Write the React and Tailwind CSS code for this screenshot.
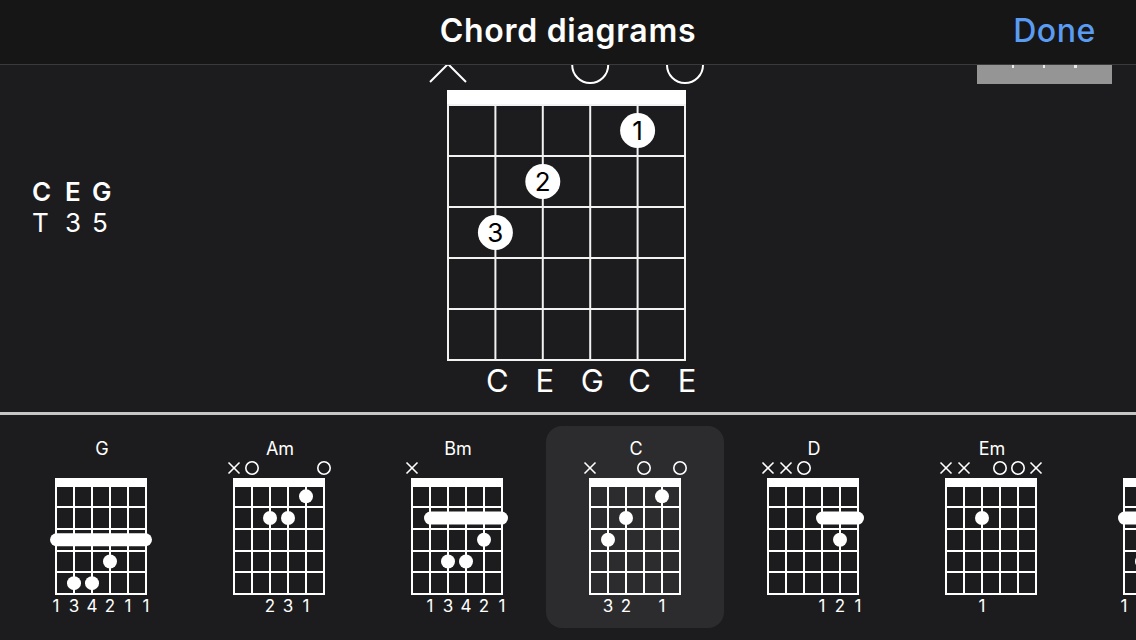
import React from "react";

const FONT = { fontFamily: "Inter, 'Liberation Sans', sans-serif" };

const S = [44, 62, 80, 98, 116, 134];
const fc = (f) => 25.5 + 21.7 * (f - 0.5);
const FRETS = [0, 1, 2, 3, 4, 5].map((j) => Math.round(25.5 + 21.7 * j));

const chords = [
  { name: "G", markers: [null, null, null, null, null, null], barres: [[3, 0, 5]], dots: [[3, 4], [1, 5], [2, 5]], fingers: ["1", "3", "4", "2", "1", "1"] },
  { name: "Am", markers: ["x", "o", null, null, null, "o"], barres: [], dots: [[4, 1], [2, 2], [3, 2]], fingers: ["", "", "2", "3", "1", ""] },
  { name: "Bm", markers: ["x", null, null, null, null, null], barres: [[2, 1, 5]], dots: [[4, 3], [2, 4], [3, 4]], fingers: ["", "1", "3", "4", "2", "1"] },
  { name: "C", markers: ["x", null, null, "o", null, "o"], barres: [], dots: [[4, 1], [2, 2], [1, 3]], fingers: ["", "3", "2", "", "1", ""], selected: true },
  { name: "D", markers: ["x", "x", "o", null, null, null], barres: [[2, 3, 5]], dots: [[4, 3]], fingers: ["", "", "", "1", "2", "1"] },
  { name: "Em", markers: ["x", "x", null, "o", "o", "x"], barres: [], dots: [[2, 2]], fingers: ["", "", "1", "", "", ""] },
  { name: "F#m", markers: [null, null, null, null, null, null], barres: [[2, 0, 5]], dots: [[1, 4], [2, 4]], fingers: ["1", "3", "4", "1", "1", "1"] },
];

function MiniChord({ c }) {
  return (
    <div
      className={`w-[178px] h-[202px] shrink-0 rounded-[16px] flex flex-col items-center ${c.selected ? "bg-[#2c2c2e]" : ""}`}
    >
      <div className="mt-[12px] h-[22px] leading-[22px] text-[18px] text-white pl-[2px]">{c.name}</div>
      <svg width="178" height="136" className="block">
        {c.markers.map((m, i) =>
          m === "x" ? (
            <g key={i} stroke="white" strokeWidth="1.6">
              <line x1={S[i] - 5.5} y1={2.5} x2={S[i] + 5.5} y2={13.5} />
              <line x1={S[i] + 5.5} y1={2.5} x2={S[i] - 5.5} y2={13.5} />
            </g>
          ) : m === "o" ? (
            <circle key={i} cx={S[i]} cy={8} r={6.2} fill="none" stroke="white" strokeWidth="1.6" />
          ) : null
        )}
        <rect x={43} y={18} width={92} height={8} fill="white" />
        {S.map((x, i) => (
          <line key={"v" + i} x1={x} y1={25} x2={x} y2={FRETS[5] + 1} stroke="white" strokeWidth="2" />
        ))}
        {FRETS.map((y, j) => (
          <line key={"h" + j} x1={43} y1={y} x2={135} y2={y} stroke="white" strokeWidth="2" />
        ))}
        {c.barres.map(([f, a, b], i) => (
          <rect key={"b" + i} x={S[a] - 6} y={fc(f) - 6.5} width={S[b] - S[a] + 12} height={13} rx={6.5} fill="white" />
        ))}
        {c.dots.map(([s, f], i) => (
          <circle key={"d" + i} cx={S[s]} cy={fc(f)} r={7} fill="white" />
        ))}
      </svg>
      <div className="w-full h-[20px] flex pl-[35px] text-[17px] leading-[20px] text-white">
        {c.fingers.map((t, i) => (
          <div key={i} className="w-[18px] text-center">
            {t}
          </div>
        ))}
      </div>
    </div>
  );
}

function BigDiagram() {
  const sx = [30, 77.4, 124.8, 172.2, 219.6, 267];
  const fy = [40, 91, 142, 193, 244, 295];
  const dots = [
    [4, 1, "1"],
    [2, 2, "2"],
    [1, 3, "3"],
  ];
  const names = ["C", "E", "G", "C", "E"];
  return (
    <svg width="300" height="340" className="block">
      <g stroke="white" strokeWidth="2" fill="none">
        <line x1={12} y1={-19} x2={48} y2={17} />
        <line x1={48} y1={-19} x2={12} y2={17} />
        <circle cx={sx[3]} cy={0} r={18} />
        <circle cx={sx[5]} cy={0} r={18} />
      </g>
      <rect x={29} y={25} width={239} height={15} fill="white" />
      {sx.map((x, i) => (
        <line key={"v" + i} x1={x} y1={39} x2={x} y2={296} stroke="#f2f2f2" strokeWidth="2" />
      ))}
      {fy.map((y, j) => (
        <line key={"h" + j} x1={29} y1={y} x2={268} y2={y} stroke="#f2f2f2" strokeWidth="2" />
      ))}
      {dots.map(([s, f, n]) => {
        const cy = (fy[f - 1] + fy[f]) / 2;
        return (
          <g key={n}>
            <circle cx={sx[s]} cy={cy} r={17.5} fill="white" />
            <text
              x={sx[s]}
              y={cy + 9.5}
              textAnchor="middle"
              fontSize="26"
              fill="black"
              style={FONT}
            >
              {n}
            </text>
          </g>
        );
      })}
      {names.map((n, i) => (
        <text
          key={i}
          x={sx[i + 1] + 2}
          y={327}
          textAnchor="middle"
          fontSize="31"
          fill="white"
          style={FONT}
        >
          {n}
        </text>
      ))}
    </svg>
  );
}

export default function App() {
  return (
    <div className="w-[1136px] h-[640px] overflow-hidden bg-[#1c1c1e] flex flex-col" style={FONT}>
      <div className="h-[65px] shrink-0 bg-[#161616] border-b border-[#3a3a3c] grid grid-cols-[1fr_auto_1fr] items-center">
        <div />
        <div className="text-white text-[32px] font-semibold tracking-[0.7px] pb-[2px]">Chord diagrams</div>
        <div className="flex justify-end pr-[40px]">
          <span className="text-[#5b9cf3] text-[32px] font-medium tracking-[0.6px] pb-[2px]">Done</span>
        </div>
      </div>

      <div className="h-[347px] shrink-0 grid grid-cols-[1fr_300px_1fr] overflow-hidden">
        <div className="pl-[32px] pt-[111px]">
          <div className="grid grid-cols-[33px_27px_auto] text-white text-[26px] leading-[31px]">
            <span className="font-semibold">C</span>
            <span className="font-semibold">E</span>
            <span className="font-semibold">G</span>
            <span>T</span>
            <span>3</span>
            <span>5</span>
          </div>
        </div>
        <BigDiagram />
        <div className="flex justify-end pr-[24px]">
          <div className="w-[135px] h-[19px] bg-[#959595] flex items-start justify-around px-[20px]">
            <div className="w-[2px] h-[3px] bg-white/80" />
            <div className="w-[2px] h-[3px] bg-white/80" />
            <div className="w-[3px] h-[3px] bg-white/80" />
          </div>
        </div>
      </div>

      <div className="h-[3px] shrink-0 bg-[#c6c6c6]" />

      <div className="flex-1 flex pl-[12px] pt-[11px] overflow-hidden">
        {chords.map((c) => (
          <MiniChord key={c.name} c={c} />
        ))}
      </div>
    </div>
  );
}
